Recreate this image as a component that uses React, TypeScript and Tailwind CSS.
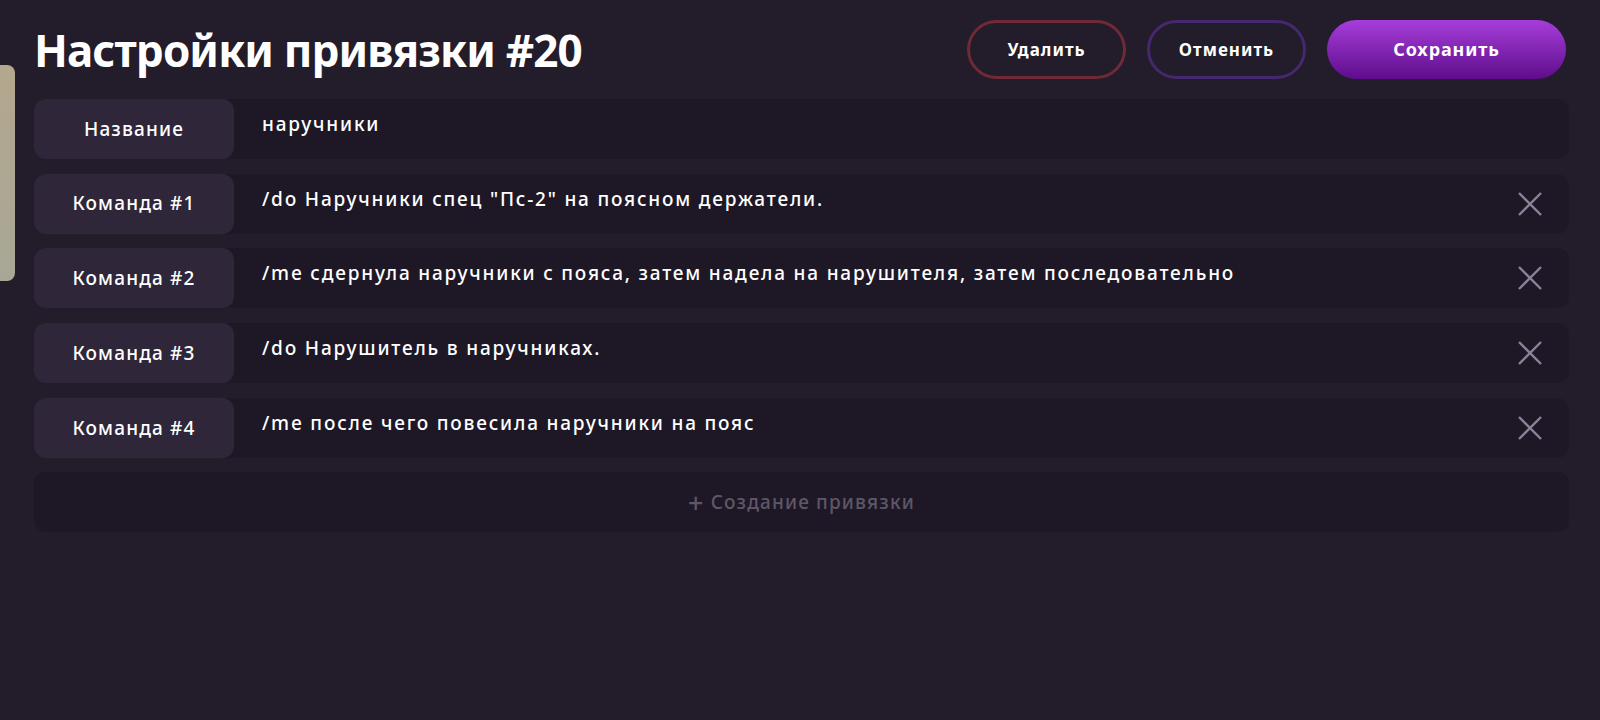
import { useState } from 'react'

type Command = { id: number; text: string }

const initialCommands: Command[] = [
  { id: 1, text: '/do Наручники спец "Пс-2" на поясном держатели.' },
  { id: 2, text: '/me сдернула наручники с пояса, затем надела на нарушителя, затем последовательно' },
  { id: 3, text: '/do Нарушитель в наручниках.' },
  { id: 4, text: '/me после чего повесила наручники на пояс' },
]

function CloseIcon() {
  return (
    <svg width="26" height="26" viewBox="0 0 26 26" fill="none">
      <path d="M2 2L24 24M24 2L2 24" stroke="#8c819a" strokeWidth="2.4" />
    </svg>
  )
}

function Row({ label, value, removable }: { label: string; value: string; removable?: boolean }) {
  return (
    <div className="flex h-[60px] rounded-xl bg-[#1e1826]">
      <div className="flex w-[200px] shrink-0 items-center justify-center rounded-xl bg-[#2f2639] text-[19px] font-medium tracking-[0.06em] text-white">
        {label}
      </div>
      <div className="flex-1 pl-[28px] pt-[11px] text-[19px] font-medium tracking-[0.095em] text-white">
        {value}
      </div>
      {removable && (
        <button className="flex w-[78px] items-center justify-center">
          <CloseIcon />
        </button>
      )}
    </div>
  )
}

export default function App() {
  const [commands] = useState(initialCommands)

  return (
    <div className="relative min-h-[720px] bg-[#221c2b] pl-[34px] pr-[31px] pt-[20px] font-['Noto_Sans',sans-serif]">
      {/* side tab peeking from the left */}
      <div className="absolute left-0 top-[65px] h-[216px] w-[15px] rounded-r-lg bg-gradient-to-b from-[#b4a78e] to-[#a8a797]" />

      {/* Header */}
      <header className="flex h-[59px] items-center justify-between">
        <h1 className="text-[44px] font-bold leading-none tracking-[-0.02em] text-white">
          Настройки привязки #20
        </h1>
        <div className="mr-[3px] flex gap-[21px]">
          <button className="h-[59px] w-[159px] rounded-full border-[3px] border-[#6f2a36] text-[17px] font-bold tracking-[0.06em] text-white">
            Удалить
          </button>
          <button className="h-[59px] w-[159px] rounded-full border-[3px] border-[#45286e] text-[17px] font-bold tracking-[0.06em] text-white">
            Отменить
          </button>
          <button className="h-[59px] w-[239px] rounded-full bg-gradient-to-b from-[#a73ddb] to-[#5f0b8c] text-[18px] font-bold tracking-[0.05em] text-white">
            Сохранить
          </button>
        </div>
      </header>

      {/* Fields */}
      <div className="mt-[20px] flex flex-col gap-[14.7px]">
        <Row label="Название" value="наручники" />
        {commands.map(c => (
          <Row key={c.id} label={`Команда #${c.id}`} value={c.text} removable />
        ))}
        <button className="flex h-[60px] items-center justify-center rounded-xl bg-[#1e1826] text-[19px] font-medium tracking-[0.06em] text-[#5e5768]">
          <span className="mr-[6px] text-[27px] font-medium leading-none">+</span>
          Создание привязки
        </button>
      </div>
    </div>
  )
}
